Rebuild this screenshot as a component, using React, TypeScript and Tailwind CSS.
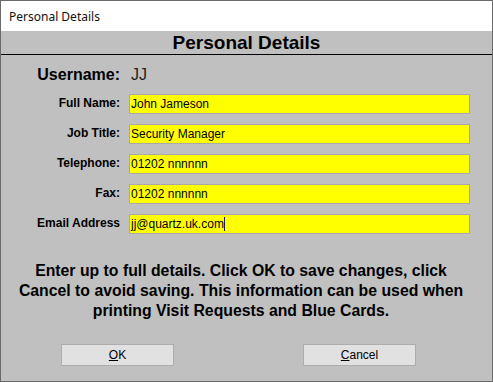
import React from "react";

const arial = { fontFamily: '"Liberation Sans", Arial, sans-serif' };

function Row({ label, value, cursor }: { label: string; value: string; cursor?: boolean }) {
  return (
    <div className="flex items-center h-[30px]">
      <div className="w-[119px] text-right text-[12px] font-bold text-black pb-[3px] whitespace-nowrap">{label}</div>
      <div className="ml-[9px] w-[341px] h-[20px] bg-[#ffff00] border border-[#a8a8a8] flex items-center pl-[1px] text-[12px] text-black leading-none">
        <span>{value}</span>
        {cursor && <span className="inline-block w-[1px] h-[14px] bg-[#1a1a60]" />}
      </div>
    </div>
  );
}

export default function App() {
  return (
    <div
      className="w-[493px] h-[382px] border border-[#6a6a6a] bg-[#c0c0c0] flex flex-col overflow-hidden"
      style={arial}
    >
      <div
        className="h-[30px] bg-white flex items-center pl-[8px] pt-[1px] text-[12px] text-[#111]"
        style={{ fontFamily: '"Noto Sans", "Open Sans", sans-serif' }}
      >
        Personal Details
      </div>
      <div className="h-[24px] flex items-center justify-center text-[19px] font-bold text-black border-b border-black leading-none">
        Personal Details
      </div>
      <div className="flex items-center h-[20px] mt-[10px]">
        <div className="w-[119px] text-right text-[16px] font-bold text-black">Username:</div>
        <div className="ml-[11px] text-[16px] text-[#222]">JJ</div>
      </div>
      <div className="flex flex-col mt-[4px]">
        <Row label="Full Name:" value="John Jameson" />
        <Row label="Job Title:" value="Security Manager" />
        <Row label="Telephone:" value="01202 nnnnnn" />
        <Row label="Fax:" value="01202 nnnnnn" />
        <Row label="Email Address" value="jj@quartz.uk.com" cursor />
      </div>
      <div className="mt-[22px] ml-[9px] w-[462px] text-center text-[15.8px] font-bold leading-[20px] text-black whitespace-nowrap">
        Enter up to full details. Click OK to save changes, click
        <br />
        Cancel to avoid saving. This information can be used when
        <br />
        printing Visit Requests and Blue Cards.
      </div>
      <div className="flex mt-[23px] pl-[60px]">
        <button className="w-[113px] h-[22px] bg-[#e1e1e1] border border-[#adadad] text-[12px] text-black leading-none">
          <span className="underline">O</span>K
        </button>
        <button className="ml-[129px] w-[113px] h-[22px] bg-[#e1e1e1] border border-[#adadad] text-[12px] text-black leading-none">
          <span className="underline">C</span>ancel
        </button>
      </div>
    </div>
  );
}
